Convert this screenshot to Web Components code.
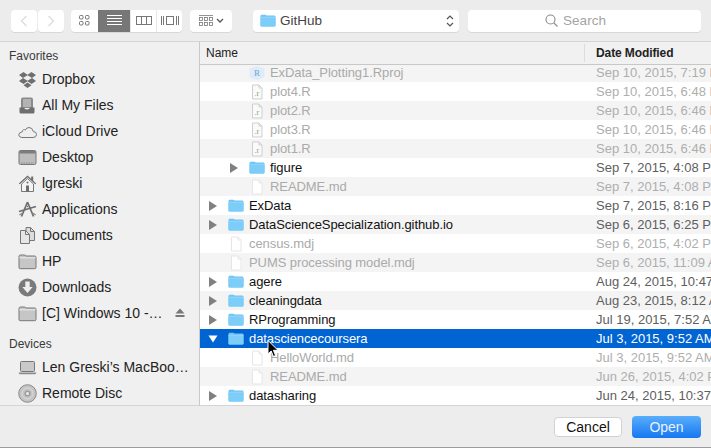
<!DOCTYPE html>
<html>
<head>
<meta charset="utf-8">
<title>Open</title>
<style>
html, body { margin: 0; height: 100%; background: #ececec; overflow: hidden; }
body { font-family: "Liberation Sans", Arial, sans-serif; }
</style>
</head>
<body>
<open-dialog>
  <dlg-toolbar slot="toolbar"></dlg-toolbar>
  <side-bar slot="side">
    <side-head>Favorites</side-head>
    <side-item icon="dropbox">Dropbox</side-item>
    <side-item icon="files">All My Files</side-item>
    <side-item icon="cloud">iCloud Drive</side-item>
    <side-item icon="desktop">Desktop</side-item>
    <side-item icon="home">lgreski</side-item>
    <side-item icon="apps">Applications</side-item>
    <side-item icon="docs">Documents</side-item>
    <side-item icon="folder">HP</side-item>
    <side-item icon="downloads">Downloads</side-item>
    <side-item icon="folder" eject>[C] Windows 10 -…</side-item>
    <side-head>Devices</side-head>
    <side-item icon="laptop">Len Greski’s MacBoo…</side-item>
    <side-item icon="disc">Remote Disc</side-item>
  </side-bar>
  <file-list slot="main">
    <file-row kind="rproj" depth="1" off date="Sep 10, 2015, 7:19 PM">ExData_Plotting1.Rproj</file-row>
    <file-row kind="r" depth="1" off date="Sep 10, 2015, 6:48 PM">plot4.R</file-row>
    <file-row kind="r" depth="1" off date="Sep 10, 2015, 6:46 PM">plot2.R</file-row>
    <file-row kind="r" depth="1" off date="Sep 10, 2015, 6:46 PM">plot3.R</file-row>
    <file-row kind="r" depth="1" off date="Sep 10, 2015, 6:46 PM">plot1.R</file-row>
    <file-row kind="dir" depth="1" date="Sep 7, 2015, 4:08 PM">figure</file-row>
    <file-row kind="doc" depth="1" off date="Sep 7, 2015, 4:08 PM">README.md</file-row>
    <file-row kind="dir" date="Sep 7, 2015, 8:16 PM">ExData</file-row>
    <file-row kind="dir" date="Sep 6, 2015, 6:25 PM">DataScienceSpecialization.github.io</file-row>
    <file-row kind="doc" off date="Sep 6, 2015, 4:02 PM">census.mdj</file-row>
    <file-row kind="doc" off date="Sep 6, 2015, 11:09 AM">PUMS processing model.mdj</file-row>
    <file-row kind="dir" date="Aug 24, 2015, 10:47 AM">agere</file-row>
    <file-row kind="dir" date="Aug 23, 2015, 8:12 AM">cleaningdata</file-row>
    <file-row kind="dir" date="Jul 19, 2015, 7:52 AM">RProgramming</file-row>
    <file-row kind="dir" open selected date="Jul 3, 2015, 9:52 AM">datasciencecoursera</file-row>
    <file-row kind="doc" depth="1" off date="Jul 3, 2015, 9:52 AM">HelloWorld.md</file-row>
    <file-row kind="doc" depth="1" off date="Jun 26, 2015, 4:02 PM">README.md</file-row>
    <file-row kind="dir" date="Jun 24, 2015, 10:37 AM">datasharing</file-row>
  </file-list>
  <dlg-footer slot="footer"></dlg-footer>
</open-dialog>

<script>
const FOLDER_BLUE = `<svg width="16" height="13" viewBox="0 0 16 13"><path d="M.5 2.2C.5 1.2 1 .7 2 .7h3.4c.8 0 1 .9 1.8.9H14c1 0 1.5.5 1.5 1.5v8.2c0 .8-.5 1.2-1.3 1.2H1.800C1 12.500.5 12.100.5 11.300z" fill="#6cc4f7"/><path d="M.5 3.200h15V11.300c0 .8-.5 1.200-1.300 1.200H1.800C1 12.500.5 12.100.5 11.300z" fill="#7dcdf9"/><path d="M.5 3.200h15" stroke="#a5dcfb" stroke-width=".8"/></svg>`

const ICONS = {
  dropbox: `<path d="M5.500 2 1 5l4 3-4 3 4.500 3 4-2.800 4 2.800 4.500-3-4-3 4-3-4.500-3-4 2.800z" fill="#6f6f6f"/><path d="M5.500 15.200l4-2.700 4 2.700-4 2.800z" fill="#6f6f6f"/><path d="M5 8l4.500 2.800L14 8 9.500 5.200z" fill="#efefef"/>`,
  files: `<path d="M3 3.500Q3 1.500 5 1.500h8q2 0 2 2V12H3z" fill="#8a8a8a"/><path d="M5 4h8M5 6h8M5 8h8M5 10h8" stroke="#dcdcdc" stroke-width="1"/><path d="M1.500 11.500h4.500q.5 2 3 2t3-2h4.500V16q0 1.500-1.500 1.500H3Q1.500 17.500 1.500 16z" fill="#6e6e6e"/>`,
  cloud: `<path d="M5 15.500h10q3.500 0 3.500-3 0-2.800-3.200-3Q14.500 5.500 11 5.500q-2.500 0-3.700 2.500-1-.6-2-.1-1.100.6-1.100 2Q.8 10.500.8 12.800q0 2.700 4.200 2.700z" fill="#efefef" stroke="#777" stroke-width="1"/>`,
  desktop: `<rect x="1" y="2.500" width="17" height="14" rx="1.500" fill="#bdbdbd" stroke="#777"/><rect x="1.500" y="3" width="16" height="2.500" fill="#7c7c7c"/><path d="M3 15h13" stroke="#8a8a8a" stroke-dasharray="1.500 1"/>`,
  home: `<path d="M9.500 1.500.8 9.500l1 .8 7.700-7 7.700 7 1-.8-3-2.800V2.500h-2v2.300z" fill="#6e6e6e"/><path d="M3.500 10v7.500h12V10L9.500 4.500z" fill="#f4f4f4" stroke="#777"/><rect x="8" y="11.500" width="3" height="6" fill="#6e6e6e"/><circle cx="9.500" cy="8.500" r="1" fill="#6e6e6e"/>`,
  apps: `<path d="M9.500 2 3.500 16.500M9.500 2l6 14.500M1 11.500l17-5M9 6.500h1" stroke="#6e6e6e" stroke-width="1.700" fill="none"/><path d="M1.500 15l3-2M14.500 13l3 2" stroke="#8a8a8a" stroke-width="1.500"/>`,
  docs: `<path d="M8 1.500h4.500l4 4v9H8z" fill="#dcdcdc" stroke="#777"/><path d="M2.500 4.500h5l4 4v9h-9z" fill="#e6e6e6" stroke="#777"/><path d="M7.500 4.500v4h4M12.500 1.500v4h4" fill="none" stroke="#777"/>`,
  folder: `<path d="M1 15.500V4.500q0-1.500 1.500-1.500h4q.8 0 1.300 1h9q1.200 0 1.200 1.500v10q0 1.200-1.200 1.200H2.200Q1 16.700 1 15.500z" fill="#c6c6c6" stroke="#777"/><path d="M1.500 5.800h16" stroke="#ededed"/>`,
  downloads: `<circle cx="9.500" cy="9.500" r="9" fill="#7a7a7a"/><path d="M7.300 3.500h4.400v5.500h3l-5.200 6-5.200-6h3z" fill="#efefef"/>`,
  laptop: `<rect x="2.500" y="3.500" width="14" height="10" rx="1" fill="#c9c9c9" stroke="#777"/><path d="M.5 14.500h18l-1 1.700H1.500z" fill="#8a8a8a"/>`,
  disc: `<circle cx="9.500" cy="9.500" r="8.800" fill="#c4c4c4" stroke="#8a8a8a"/><circle cx="9.500" cy="9.500" r="5.500" fill="none" stroke="#dcdcdc"/><circle cx="9.500" cy="9.500" r="3" fill="#9c9c9c"/><circle cx="9.500" cy="9.500" r="1.500" fill="#efefef"/>`
}

class OpenDialog extends HTMLElement {
  constructor() {
    super()
    this.attachShadow({mode: 'open'}).innerHTML = `
    <style>
    :host { display: grid; grid-template-columns: 200px 1fr; grid-template-rows: 42px 364px 42px; height: 448px; width: 711px; background: #ececec; }
    .top { grid-column: 1 / 3; border-bottom: 1px solid #d4d4d4; box-sizing: border-box; }
    .foot { grid-column: 1 / 3; }
    </style>
    <div class="top"><slot name="toolbar"></slot></div>
    <slot name="side"></slot>
    <slot name="main"></slot>
    <div class="foot"><slot name="footer"></slot></div>`
  }
}

class DlgToolbar extends HTMLElement {
  constructor() {
    super()
    this.attachShadow({mode: 'open'}).innerHTML = `
    <style>
    :host { display: flex; align-items: center; height: 41px; padding: 0 10px 0 11px; box-sizing: border-box; color: #777; }
    .btn { background: #fff; border-radius: 4px; height: 22px; display: flex; align-items: center; justify-content: center; box-shadow: 0 1px 0 #d8d8d8; }
    .nav { width: 26px; }
    .nav + .nav { margin-left: 1px; }
    .views { display: flex; margin-left: 7px; background: #fff; border-radius: 4px; box-shadow: 0 1px 0 #d8d8d8; overflow: hidden; }
    .views div { height: 22px; box-sizing: border-box; display: flex; align-items: center; justify-content: center; border-left: 1px solid #e8e8e8; }
    .views div:first-child { border: 0; }
    .views .on { background: #777; border-color: #777; }
    .arrange { width: 42px; margin-left: 8px; gap: 3px; }
    .path { width: 206px; margin-left: 21px; justify-content: flex-start; padding-left: 7px; box-sizing: border-box; font-size: 13.500px; color: #444; gap: 4px; }
    .path span { flex: 1; }
    .path svg:last-child { margin-right: 5px; }
    .search { flex: 1; margin-left: 9px; color: #a4a4a4; font-size: 13.500px; gap: 5px; padding-right: 18px; }
    </style>
    <div class="btn nav"><svg width="10" height="14"><path d="M7.500 2 2.500 7l5 5" fill="none" stroke="#dcdcdc" stroke-width="1.300"/></svg></div>
    <div class="btn nav"><svg width="10" height="14"><path d="M2.500 2l5 5-5 5" fill="none" stroke="#dcdcdc" stroke-width="1.300"/></svg></div>
    <div class="views">
      <div style="width:27px"><svg width="11" height="11" fill="none" stroke="#777"><rect x=".5" y=".5" width="3.500" height="3.500" rx="1"/><rect x="6.500" y=".5" width="3.500" height="3.500" rx="1"/><rect x=".5" y="6.500" width="3.500" height="3.500" rx="1"/><rect x="6.500" y="6.500" width="3.500" height="3.500" rx="1"/></svg></div>
      <div class="on" style="width:32px"><svg width="15" height="11" stroke="#fff"><path d="M0 .5h15M0 3.500h15M0 6.500h15M0 9.500h15"/></svg></div>
      <div style="width:26px"><svg width="16" height="11" fill="none" stroke="#777"><rect x=".5" y="1.500" width="15" height="8"/><path d="M5.500 1.500v8M10.500 1.500v8"/></svg></div>
      <div style="width:26px"><svg width="18" height="11" fill="none" stroke="#777"><rect x="5.500" y="1.500" width="7" height="8"/><path d="M.5 1v9M2.500 1v9M15.500 1v9M17.500 1v9"/></svg></div>
    </div>
    <div class="btn arrange"><svg width="14" height="12" fill="none" stroke="#777" stroke-width=".8"><path d="M0 .5h14"/><rect x=".5" y="2.500" width="3" height="3"/><rect x="5.500" y="2.500" width="3" height="3"/><rect x="10.500" y="2.500" width="3" height="3"/><rect x=".5" y="7.500" width="3" height="3"/><rect x="5.500" y="7.500" width="3" height="3"/><rect x="10.500" y="7.500" width="3" height="3"/></svg><svg width="8" height="6"><path d="M1 1l3 3 3-3" fill="none" stroke="#555" stroke-width="1.300"/></svg></div>
    <div class="btn path">${FOLDER_BLUE}<span>GitHub</span><svg width="8" height="14" fill="none" stroke="#555" stroke-width="1.200"><path d="M1 5l3-3 3 3M1 9l3 3 3-3"/></svg></div>
    <div class="btn search"><svg width="13" height="13" fill="none" stroke="#8a8a8a" stroke-width="1.100"><circle cx="5.500" cy="5.500" r="4.500"/><path d="M9 9l3.500 3.500"/></svg><span>Search</span></div>`
  }
}

class SideBar extends HTMLElement {
  constructor() {
    super()
    this.attachShadow({mode: 'open'}).innerHTML = `
    <style>
    :host { display: flex; flex-direction: column; background: #f0f0f0; border-right: 1px solid #c8c8c8; border-bottom: 1px solid #d4d4d4; box-sizing: border-box; padding-top: 4px; overflow: hidden; }
    </style>
    <slot></slot>`
  }
}

class SideHead extends HTMLElement {
  constructor() {
    super()
    this.attachShadow({mode: 'open'}).innerHTML = `
    <style>
    :host { display: block; flex: none; height: 20px; line-height: 20px; padding-left: 9px; font-size: 12px; color: #3a3a3a; }
    :host(:not(:first-child)) { margin-top: 8px; }
    </style>
    <slot></slot>`
  }
}

class SideItem extends HTMLElement {
  constructor() {
    super()
    const eject = this.hasAttribute('eject') ? `<svg class="eject" width="10" height="10" fill="#777"><path d="M5 .5 9.500 5.500H.5z"/><rect x=".5" y="7" width="9" height="2"/></svg>` : ''
    this.attachShadow({mode: 'open'}).innerHTML = `
    <style>
    :host { display: flex; flex: none; align-items: center; height: 26px; padding-left: 18px; font-size: 14px; color: #222; white-space: nowrap; }
    svg { flex: none; margin-right: 5px; }
    .eject { margin: 0 14px 0 auto; }
    </style>
    <svg width="19" height="19" viewBox="0 0 19 19">${ICONS[this.getAttribute('icon')]}</svg><slot></slot>${eject}`
  }
}

class FileList extends HTMLElement {
  constructor() {
    super()
    this.attachShadow({mode: 'open'}).innerHTML = `
    <style>
    :host { display: flex; flex-direction: column; position: relative; background: #fff; border-bottom: 1px solid #d4d4d4; box-sizing: border-box; overflow: hidden; min-width: 0; }
    .head { flex: none; height: 23px; box-sizing: border-box; display: grid; grid-template-columns: 384px 1fr; align-items: center; background: #f1f1f1; border-bottom: 1px solid #c8c8c8; font-size: 12px; color: #222; }
    .head div { padding-left: 6px; height: 18px; line-height: 18px; }
    .head div + div { padding-left: 11px; border-left: 1px solid #dcdcdc; font-weight: bold; letter-spacing: -.1px; }
    .rows { flex: 1; overflow: hidden; }
    .inner { margin-top: -2px; }
    .cursor { position: absolute; left: 67px; top: 298px; }
    </style>
    <div class="head"><div>Name</div><div>Date Modified</div></div>
    <div class="rows"><div class="inner"><slot></slot></div></div>
    <svg class="cursor" width="12" height="18" viewBox="0 0 12 18"><path d="M1 .5V14l3.200-3 2.200 5.500 2.200-1-2.200-5.200H11z" fill="#000" stroke="#fff" stroke-width="1"/></svg>`
  }
}

class FileRow extends HTMLElement {
  constructor() {
    super()
    const kind = this.getAttribute('kind')
    const depth = Number(this.getAttribute('depth') || 0)
    const open = this.hasAttribute('open')
    let icon = ''
    if (kind == 'dir') {
      icon = FOLDER_BLUE
    } else if (kind == 'r') {
      icon = `<svg width="16" height="16" viewBox="0 0 16 16"><path d="M3.500 1h6.500l3 3v11h-9.500z" fill="#fafafa" stroke="#cfcfcf"/><path d="M10 1v3h3" fill="none" stroke="#cfcfcf"/><text x="5.500" y="12" font-size="8" font-family="Liberation Serif, serif" fill="#8f9a7a">.r</text></svg>`
    } else if (kind == 'rproj') {
      icon = `<svg width="16" height="16" viewBox="0 0 16 16"><path d="M.5 3.500 8 1l7.500 2.500v9L8 15 .5 12.500z" fill="#dfebf6"/><text x="5" y="11" font-size="9" font-family="Liberation Serif, serif" fill="#6aa7d8">R</text></svg>`
    } else {
      icon = `<svg width="16" height="16" viewBox="0 0 16 16"><path d="M3.500 1h6.500l3 3v11h-9.500z" fill="#fff" stroke="#e6e6e6"/><path d="M10 1v3h3" fill="none" stroke="#e6e6e6"/></svg>`
    }
    const tri = kind == 'dir'
      ? (open ? `<svg width="10" height="10"><path d="M.5 1.500h9L5 8.500z" fill="#fff"/></svg>`
              : `<svg width="10" height="10"><path d="M1 0 9 5 1 10z" fill="#808080"/></svg>`)
      : ''
    this.attachShadow({mode: 'open'}).innerHTML = `
    <style>
    :host { display: grid; grid-template-columns: 384px 1fr; height: 19px; align-items: center; font-size: 13px; white-space: nowrap; color: #111; background: #fff; }
    :host(:nth-child(odd)) { background: #f4f4f4; }
    :host([off]) { color: #aaa; }
    :host([selected]) { background: #0064d3; color: #fff; }
    svg { display: block; }
    .name { display: flex; align-items: center; padding-left: calc(8px + ${depth} * 21px); letter-spacing: -.08px; }
    .tri { width: 10px; height: 10px; margin-right: 10px; flex: none; }
    .ico { width: 16px; height: 16px; margin-right: 5px; flex: none; display: flex; align-items: center; }
    .date { padding-left: 12px; color: #5e5e5e; }
    :host([off]) .date { color: #aeaeae; }
    :host([selected]) .date { color: #fff; }
    </style>
    <div class="name"><div class="tri">${tri}</div><div class="ico">${icon}</div><slot></slot></div>
    <div class="date">${this.getAttribute('date')}</div>`
  }
}

class DlgFooter extends HTMLElement {
  constructor() {
    super()
    this.attachShadow({mode: 'open'}).innerHTML = `
    <style>
    :host { display: flex; justify-content: flex-end; align-items: center; gap: 10px; height: 42px; box-sizing: border-box; padding: 0 10px 0 0; background: #ededed; border-bottom: 1px solid #9c9c9c; font-size: 14px; }
    button { font: inherit; height: 20px; padding: 0; border-radius: 4px; }
    .cancel { width: 68px; background: #fff; border: 1px solid #d2d2d2; color: #111; }
    .open { width: 69px; height: 22px; border: 0; color: #e8f2ff; background: linear-gradient(#5aaefc, #1577f0); }
    </style>
    <button class="cancel">Cancel</button>
    <button class="open">Open</button>`
  }
}

customElements.define('open-dialog', OpenDialog)
customElements.define('dlg-toolbar', DlgToolbar)
customElements.define('side-bar', SideBar)
customElements.define('side-head', SideHead)
customElements.define('side-item', SideItem)
customElements.define('file-list', FileList)
customElements.define('file-row', FileRow)
customElements.define('dlg-footer', DlgFooter)
</script>
</body>
</html>
